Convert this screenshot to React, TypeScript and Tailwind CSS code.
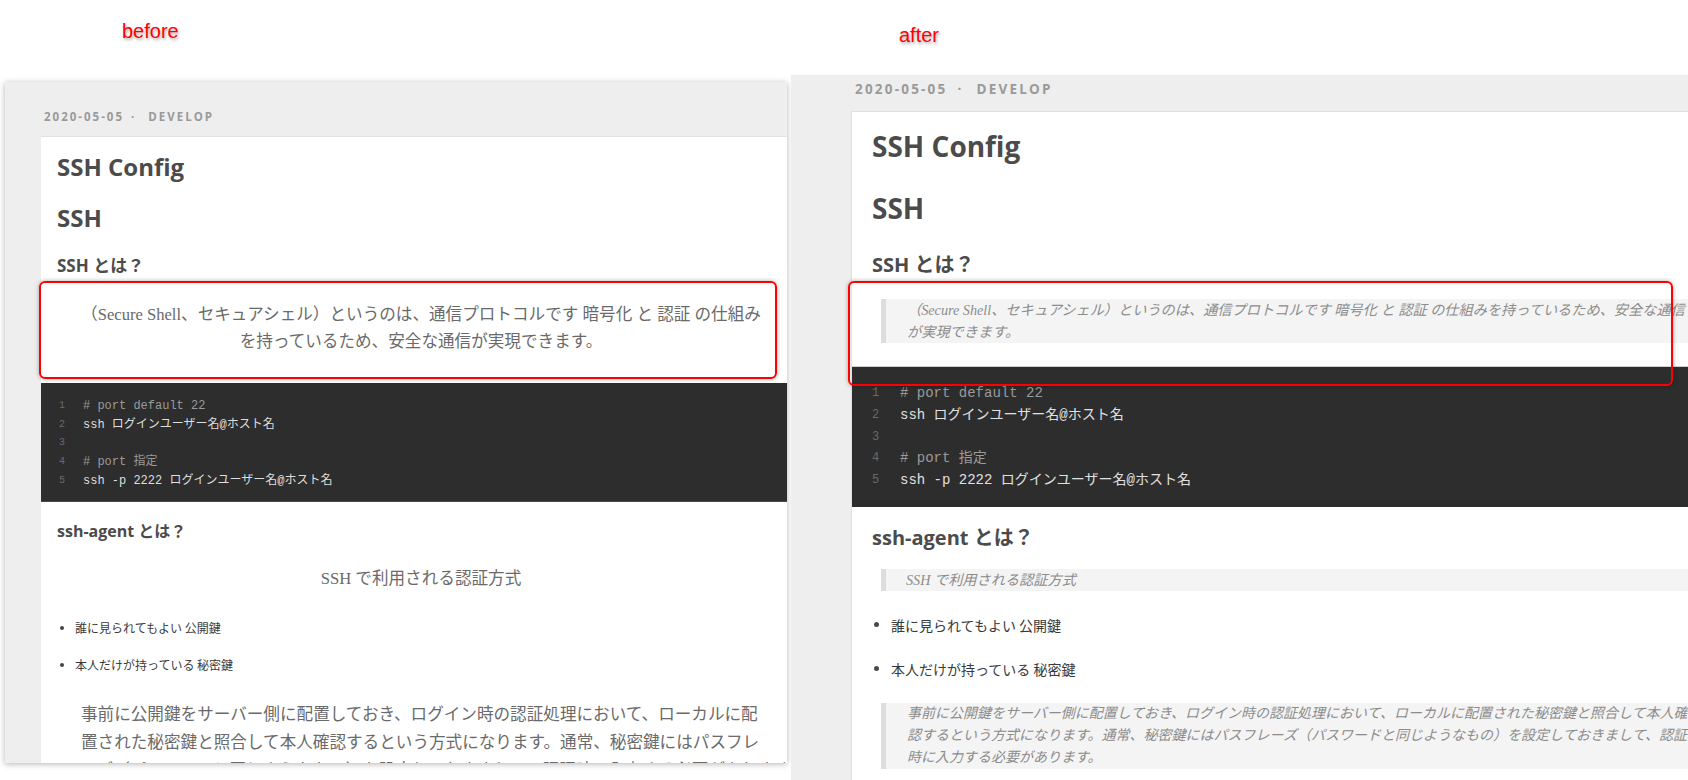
import React from "react";

const leftCode: { t: string; c?: boolean }[] = [
  { t: "# port default 22", c: true },
  { t: "ssh ログインユーザー名@ホスト名" },
  { t: "" },
  { t: "# port 指定", c: true },
  { t: "ssh -p 2222 ログインユーザー名@ホスト名" },
];

function LeftCard() {
  return (
    <div className="flex-1 min-h-0 overflow-hidden ml-[36px] bg-white border-t border-[#e2e2e2] pl-[16px] pr-[16px] pt-[14px] text-[#4b4b4b]">
      <h1 className="text-[24px] leading-[32px] font-bold whitespace-nowrap font-['Open_Sans','Noto_Sans_CJK_JP',sans-serif]">SSH Config</h1>
      <h2 className="mt-[19px] text-[24px] leading-[32px] font-bold whitespace-nowrap font-['Open_Sans','Noto_Sans_CJK_JP',sans-serif]">SSH</h2>
      <h3 className="mt-[20px] text-[17px] leading-[24px] font-bold whitespace-nowrap font-['Open_Sans','Noto_Sans_CJK_JP',sans-serif]">SSH とは？</h3>
      <div className="mt-[23px] ml-[21px] w-[686px] text-center text-[16.6px] leading-[27px] text-[#6a6a6a] font-['Liberation_Serif','Noto_Sans_CJK_JP',serif]">
        <div className="whitespace-nowrap">（Secure Shell、セキュアシェル）というのは、通信プロトコルです 暗号化 と 認証 の仕組み</div>
        <div className="whitespace-nowrap">を持っているため、安全な通信が実現できます。</div>
      </div>
      <div className="mt-[28px] -mx-[16px] bg-[#2d2d2d] border-b border-[#4a4a4a] pt-[14px] pb-[11px] text-[12px] leading-[18.7px] font-['Liberation_Mono','Noto_Sans_CJK_JP',monospace]">
        {leftCode.map((l, i) => (
          <div key={i} className="flex h-[18.7px] whitespace-nowrap">
            <span className="w-[42px] pl-[18px] text-[10px] text-[#6a6a6a]">{i + 1}</span>
            <span className={l.c ? "text-[#9a9a9a]" : "text-[#dedede]"}>{l.t}</span>
          </div>
        ))}
      </div>
      <h3 className="mt-[17px] text-[16px] leading-[24px] font-bold whitespace-nowrap font-['Open_Sans','Noto_Sans_CJK_JP',sans-serif]">ssh-agent とは？</h3>
      <div className="mt-[22px] ml-[21px] w-[686px] text-center text-[16.6px] leading-[27px] text-[#6a6a6a] font-['Liberation_Serif','Noto_Sans_CJK_JP',serif]">
        <div className="whitespace-nowrap">SSH で利用される認証方式</div>
      </div>
      <ul className="mt-[26px] text-[12px] leading-[20px] text-[#3a3a3a] font-['Noto_Sans_CJK_JP',sans-serif]">
        <li className="flex items-center whitespace-nowrap">
          <span className="ml-[3px] w-[4px] h-[4px] rounded-full bg-[#444]" />
          <span className="ml-[11px]">誰に見られてもよい 公開鍵</span>
        </li>
        <li className="mt-[17px] flex items-center whitespace-nowrap">
          <span className="ml-[3px] w-[4px] h-[4px] rounded-full bg-[#444]" />
          <span className="ml-[11px]">本人だけが持っている 秘密鍵</span>
        </li>
      </ul>
      <div className="mt-[26px] ml-[24px] text-[16.6px] leading-[28px] text-[#6a6a6a] font-['Liberation_Serif','Noto_Sans_CJK_JP',serif]">
        <div className="whitespace-nowrap">事前に公開鍵をサーバー側に配置しておき、ログイン時の認証処理において、ローカルに配</div>
        <div className="whitespace-nowrap">置された秘密鍵と照合して本人確認するという方式になります。通常、秘密鍵にはパスフレ</div>
        <div className="whitespace-nowrap">ーズ（パスワードと同じようなもの）を設定しておきまして、認証時に入力する必要があります。</div>
      </div>
    </div>
  );
}

function RightCard() {
  return (
    <div className="flex-1 min-h-0 overflow-hidden bg-white border-t border-l border-[#e0e0e0] pl-[20px] pt-[16px] text-[#4b4b4b]">
      <h1 className="text-[28px] leading-[36px] font-bold whitespace-nowrap font-['Open_Sans','Noto_Sans_CJK_JP',sans-serif]">SSH Config</h1>
      <h2 className="mt-[26px] text-[28px] leading-[36px] font-bold whitespace-nowrap font-['Open_Sans','Noto_Sans_CJK_JP',sans-serif]">SSH</h2>
      <h3 className="mt-[25px] text-[20px] leading-[28px] font-bold whitespace-nowrap font-['Open_Sans','Noto_Sans_CJK_JP',sans-serif]">SSH とは？</h3>
      <div className="mt-[20px] ml-[9px] border-l-[5px] border-[#dddddd] bg-[#f4f4f4] pl-[21px] text-[14.2px] leading-[22px] italic text-[#8c8c8c] font-['Liberation_Serif','Noto_Sans_CJK_JP',serif]">
        <div className="whitespace-nowrap">（Secure Shell、セキュアシェル）というのは、通信プロトコルです 暗号化 と 認証 の仕組みを持っているため、安全な通信</div>
        <div className="whitespace-nowrap">が実現できます。</div>
      </div>
      <div className="mt-[23px] -ml-[20px] bg-[#2d2d2d] border-t border-[#cfcfcf] pt-[16px] pb-[15px] text-[14px] leading-[21.75px] font-['Liberation_Mono','Noto_Sans_CJK_JP',monospace]">
        {leftCode.map((l, i) => (
          <div key={i} className="flex h-[21.75px] whitespace-nowrap">
            <span className="w-[48px] pl-[20px] text-[12px] text-[#6a6a6a]">{i + 1}</span>
            <span className={l.c ? "text-[#9a9a9a]" : "text-[#e0e0e0]"}>{l.t}</span>
          </div>
        ))}
      </div>
      <h3 className="mt-[17px] text-[20px] leading-[28px] font-bold whitespace-nowrap font-['Open_Sans','Noto_Sans_CJK_JP',sans-serif]">ssh-agent とは？</h3>
      <div className="mt-[17px] ml-[9px] border-l-[5px] border-[#dddddd] bg-[#f4f4f4] pl-[20px] text-[14.2px] leading-[22px] italic text-[#8c8c8c] font-['Liberation_Serif','Noto_Sans_CJK_JP',serif]">
        <div className="whitespace-nowrap">SSH で利用される認証方式</div>
      </div>
      <ul className="mt-[23px] text-[14px] leading-[22px] text-[#3a3a3a] font-['Noto_Sans_CJK_JP',sans-serif]">
        <li className="flex items-center whitespace-nowrap">
          <span className="ml-[2px] w-[5px] h-[5px] rounded-full bg-[#4a4a4a]" />
          <span className="ml-[12px]">誰に見られてもよい 公開鍵</span>
        </li>
        <li className="mt-[22px] flex items-center whitespace-nowrap">
          <span className="ml-[2px] w-[5px] h-[5px] rounded-full bg-[#4a4a4a]" />
          <span className="ml-[12px]">本人だけが持っている 秘密鍵</span>
        </li>
      </ul>
      <div className="mt-[23px] ml-[9px] border-l-[5px] border-[#dddddd] bg-[#f4f4f4] pl-[21px] text-[14px] leading-[22px] italic text-[#8c8c8c] font-['Liberation_Serif','Noto_Sans_CJK_JP',serif]">
        <div className="whitespace-nowrap">事前に公開鍵をサーバー側に配置しておき、ログイン時の認証処理において、ローカルに配置された秘密鍵と照合して本人確</div>
        <div className="whitespace-nowrap">認するという方式になります。通常、秘密鍵にはパスフレーズ（パスワードと同じようなもの）を設定しておきまして、認証</div>
        <div className="whitespace-nowrap">時に入力する必要があります。</div>
      </div>
    </div>
  );
}

export default function App() {
  return (
    <div className="relative w-[1688px] h-[780px] overflow-hidden bg-white flex">
      {/* before */}
      <div className="w-[791px] shrink-0 flex flex-col">
        <div className="pt-[19px] pl-[122px] h-[43px] text-[20px] leading-[24px] text-[#ff0000] font-['Liberation_Sans',sans-serif] [text-shadow:1px_2px_3px_rgba(0,0,0,0.35)]">
          before
        </div>
        <div className="mt-[39px] ml-[5px] w-[782px] h-[681px] bg-[#eeeeee] shadow-[0_1px_6px_rgba(0,0,0,0.3)] flex flex-col">
          <div className="pt-[27px] pl-[39px] mb-[11px] h-[43px] text-[11.5px] leading-[16px] font-bold tracking-[2px] text-[#9a9a9a] whitespace-nowrap font-['Open_Sans',sans-serif]">
            <span>2020-05-05</span>
            <span className="ml-[7px]">·</span>
            <span className="ml-[12px]">DEVELOP</span>
          </div>
          <LeftCard />
        </div>
      </div>

      {/* after */}
      <div className="flex-1 min-w-0 flex flex-col">
        <div className="h-[75px] pt-[23px] pl-[108px] text-[20px] leading-[24px] text-[#ff0000] font-['Liberation_Sans',sans-serif] [text-shadow:1px_2px_3px_rgba(0,0,0,0.35)]">
          after
        </div>
        <div className="flex-1 min-h-0 bg-[#eeeeee] pl-[60px] flex flex-col">
          <div className="pt-[5px] pl-[4px] mb-[13px] h-[23px] text-[13.5px] leading-[18px] font-bold tracking-[2.2px] text-[#9a9a9a] whitespace-nowrap font-['Open_Sans',sans-serif]">
            <span>2020-05-05</span>
            <span className="ml-[10px]">·</span>
            <span className="ml-[13px]">DEVELOP</span>
          </div>
          <RightCard />
        </div>
      </div>

      {/* highlight boxes */}
      <div className="absolute left-[39px] top-[281px] w-[738px] h-[98px] border-2 border-[#ff0000] rounded-[6px] shadow-[0_0_4px_rgba(0,0,0,0.35)]" />
      <div className="absolute left-[848px] top-[281px] w-[825px] h-[105px] border-2 border-[#ff0000] rounded-[6px] shadow-[0_0_4px_rgba(0,0,0,0.35)]" />
    </div>
  );
}
